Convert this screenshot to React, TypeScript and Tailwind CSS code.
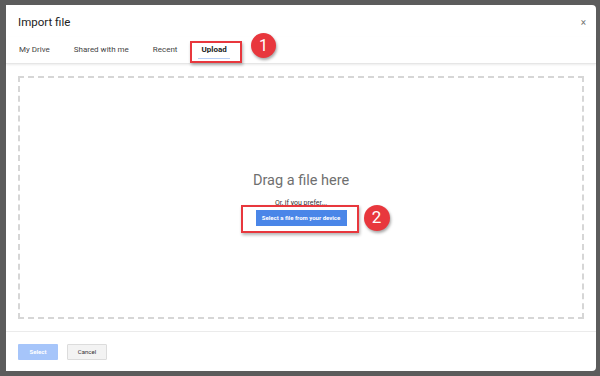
import React from "react";

export default function App() {
  return (
    <div
      className="w-[600px] h-[376px] bg-[#5c5c5c] pl-[6px] pt-[5px] pr-[4px] pb-[5px] overflow-hidden"
      style={{ fontFamily: "Roboto, 'Liberation Sans', sans-serif" }}
    >
      <div className="relative w-full h-full bg-white rounded-r-[4px] flex flex-col">
        {/* header */}
        <div className="h-[32px] flex items-center justify-between pl-[12px] pr-[10px] pt-[4px]">
          <span className="text-[11.5px] text-[#222]">Import file</span>
          <span className="text-[10px] text-[#777] leading-none">×</span>
        </div>
        {/* tabs */}
        <div className="relative h-[27px] flex items-center gap-[24px] pl-[13px] text-[8px] text-[#444] border-b border-[#e6e6e6] shadow-[0_1px_2px_rgba(0,0,0,0.08)]">
          <span>My Drive</span>
          <span>Shared with me</span>
          <span>Recent</span>
          <span className="relative font-bold text-[#222]">
            Upload
            <span className="absolute left-[-3px] right-[-3px] top-[14px] h-[1px] bg-[#b9cff5]" />
          </span>
          {/* annotation 1 */}
          <div className="absolute left-[184px] top-[4px] w-[52px] h-[22px] border-[2px] border-[#e8373d] shadow-[1px_2px_3px_rgba(0,0,0,0.3)]" />
          <div className="absolute left-[245px] top-[-4px] w-[25px] h-[25px] rounded-full bg-[#e8373d] text-white text-[16px] flex items-center justify-center shadow-[1px_2px_3px_rgba(0,0,0,0.35)]">
            1
          </div>
        </div>
        {/* body */}
        <div className="flex-1 px-[12px] pt-[12px] pb-[12px]">
          <div className="relative h-full border-[2px] border-dashed border-[#d6d6d6] flex flex-col items-center pt-[96px]">
            <span className="text-[14.5px] text-[#6f6f6f] leading-none">Drag a file here</span>
            <span className="text-[7px] text-[#333] mt-[11px] leading-none">Or, if you prefer...</span>
            <div className="relative mt-[3px]">
              <div className="w-[91px] h-[16px] bg-[#4a86e8] text-white text-[6px] font-bold flex items-center justify-center">
                Select a file from your device
              </div>
              <div className="absolute left-[-15px] top-[-5px] w-[118px] h-[28px] border-[2px] border-[#e8373d] shadow-[1px_2px_3px_rgba(0,0,0,0.3)]" />
              <div className="absolute left-[108px] top-[-5px] w-[26px] h-[26px] rounded-full bg-[#e8373d] text-white text-[17px] flex items-center justify-center shadow-[1px_2px_3px_rgba(0,0,0,0.35)]">
                2
              </div>
            </div>
          </div>
        </div>
        {/* footer */}
        <div className="h-[40px] border-t border-[#ebebeb] flex items-center gap-[9px] pl-[12px]">
          <div className="w-[40px] h-[16px] bg-[#a6c5fa] text-white text-[6px] font-bold flex items-center justify-center rounded-[1px]">
            Select
          </div>
          <div className="w-[40px] h-[16px] bg-[#f3f3f3] border border-[#dcdcdc] text-[#333] text-[6px] flex items-center justify-center rounded-[1px]">
            Cancel
          </div>
        </div>
      </div>
    </div>
  );
}
